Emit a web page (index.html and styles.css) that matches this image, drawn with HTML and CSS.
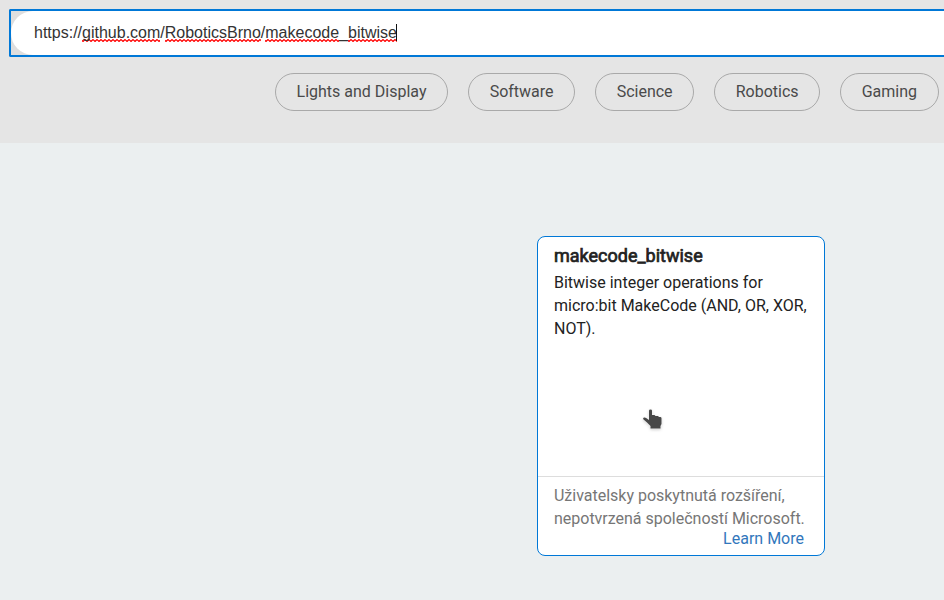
FILE: index.html
```html
<!DOCTYPE html>
<html lang="cs">
<head>
<meta charset="utf-8">
<title>Extensions</title>
<link rel="stylesheet" href="styles.css">
</head>
<body>
<header class="top">
  <div class="search"><div class="field" role="textbox">https://<span class="misspelled">github.com</span>/<span class="misspelled">RoboticsBrno</span>/<span class="misspelled">makecode</span>_<span class="misspelled">bitwise</span><span class="caret"></span></div></div>
  <nav class="chips">
    <a class="chip">Lights and Display</a>
    <a class="chip">Software</a>
    <a class="chip">Science</a>
    <a class="chip">Robotics</a>
    <a class="chip">Gaming</a>
  </nav>
</header>
<main class="results">
  <article class="card">
    <div class="body">
      <h2 class="title">makecode_bitwise</h2>
      <p class="description">Bitwise integer operations for micro:bit MakeCode (AND, OR, XOR, NOT).</p>
    </div>
    <footer class="foot">
      <p class="notice">Uživatelsky poskytnutá rozšíření, nepotvrzená společností Microsoft.</p>
      <a class="more">Learn More</a>
    </footer>
    <svg class="pointer" width="24" height="26" viewBox="0 0 24 26">
      <path d="M8 4.8Q8 3.5 9.5 3.5T11 4.8V9H13.5L14.5 10H17L18 11H19.2Q20.5 11 20.5 12.3V18L19.5 20V22.5H9.5V20L6 16.5L2.3 13.2Q1.7 12 3 11.5Q4.3 11.3 5.5 12.3L8 14Z"/>
    </svg>
  </article>
</main>
</body>
</html>
```
FILE: styles.css
```css
* { box-sizing: border-box; }
body {
  margin: 0;
  width: 944px;
  height: 600px;
  overflow: hidden;
  background: #ebeff0;
  font-family: Roboto, sans-serif;
  font-size: 16px;
}
.top { height: 143px; padding-top: 9px; background: #e5e5e5; }
.search {
  height: 48px;
  margin-left: 9px;
  border: 2px solid #0078d7;
  border-right: 0;
  border-radius: 2px 0 0 2px;
  background: #dedede;
}
.field {
  display: flex;
  height: 44px;
  padding: 12px 0 0 23px;
  border-radius: 22px 0 0 22px;
  background: #fff;
  color: #333;
  font-family: "Liberation Sans", Arial, sans-serif;
  line-height: 20px;
}
.misspelled {
  height: 19px;
  background: url("data:image/svg+xml,%3Csvg xmlns='http://www.w3.org/2000/svg' width='4' height='3'%3E%3Cpath d='M-1 .5L1 2.5L3 .5L5 2.5' fill='none' stroke='red' stroke-width='1.2'/%3E%3C/svg%3E") left bottom repeat-x;
}
.caret { width: 1px; height: 17px; margin: 1px 0 0 -1px; background: #111; }
.chips { display: flex; gap: 20px; margin: 16px 0 0 275px; }
.chip {
  height: 38px;
  padding: 0 20.55px;
  border: 1px solid #a9a9a9;
  border-radius: 19px;
  color: #4a4a4a;
  line-height: 36px;
  white-space: nowrap;
}
.results { padding: 93px 0 0 537px; }
.card {
  position: relative;
  display: flex;
  flex-direction: column;
  width: 288px;
  height: 320px;
  border: 1px solid #0078d7;
  border-radius: 8px;
  background: #fff;
}
.body { flex: 1; padding: 7px 16px 0; color: #222; }
.title { margin: 0; font-size: 18px; line-height: 23px; font-weight: 400; -webkit-text-stroke: .7px #222; }
.description { margin: 4px 0 0; line-height: 23px; }
.foot { height: 79px; padding: 7px 16px 0; border-top: 1px solid #ddd; color: #767676; }
.notice { margin: 0; line-height: 23px; letter-spacing: -.01px; }
.more { display: block; margin-right: 4px; color: #3277bc; line-height: 17px; text-align: right; }
.pointer { position: absolute; left: 103px; top: 169px; fill: #484848; filter: drop-shadow(0 0 1px #fff) drop-shadow(0 1px 1px rgba(0,0,0,.2)); }
```
